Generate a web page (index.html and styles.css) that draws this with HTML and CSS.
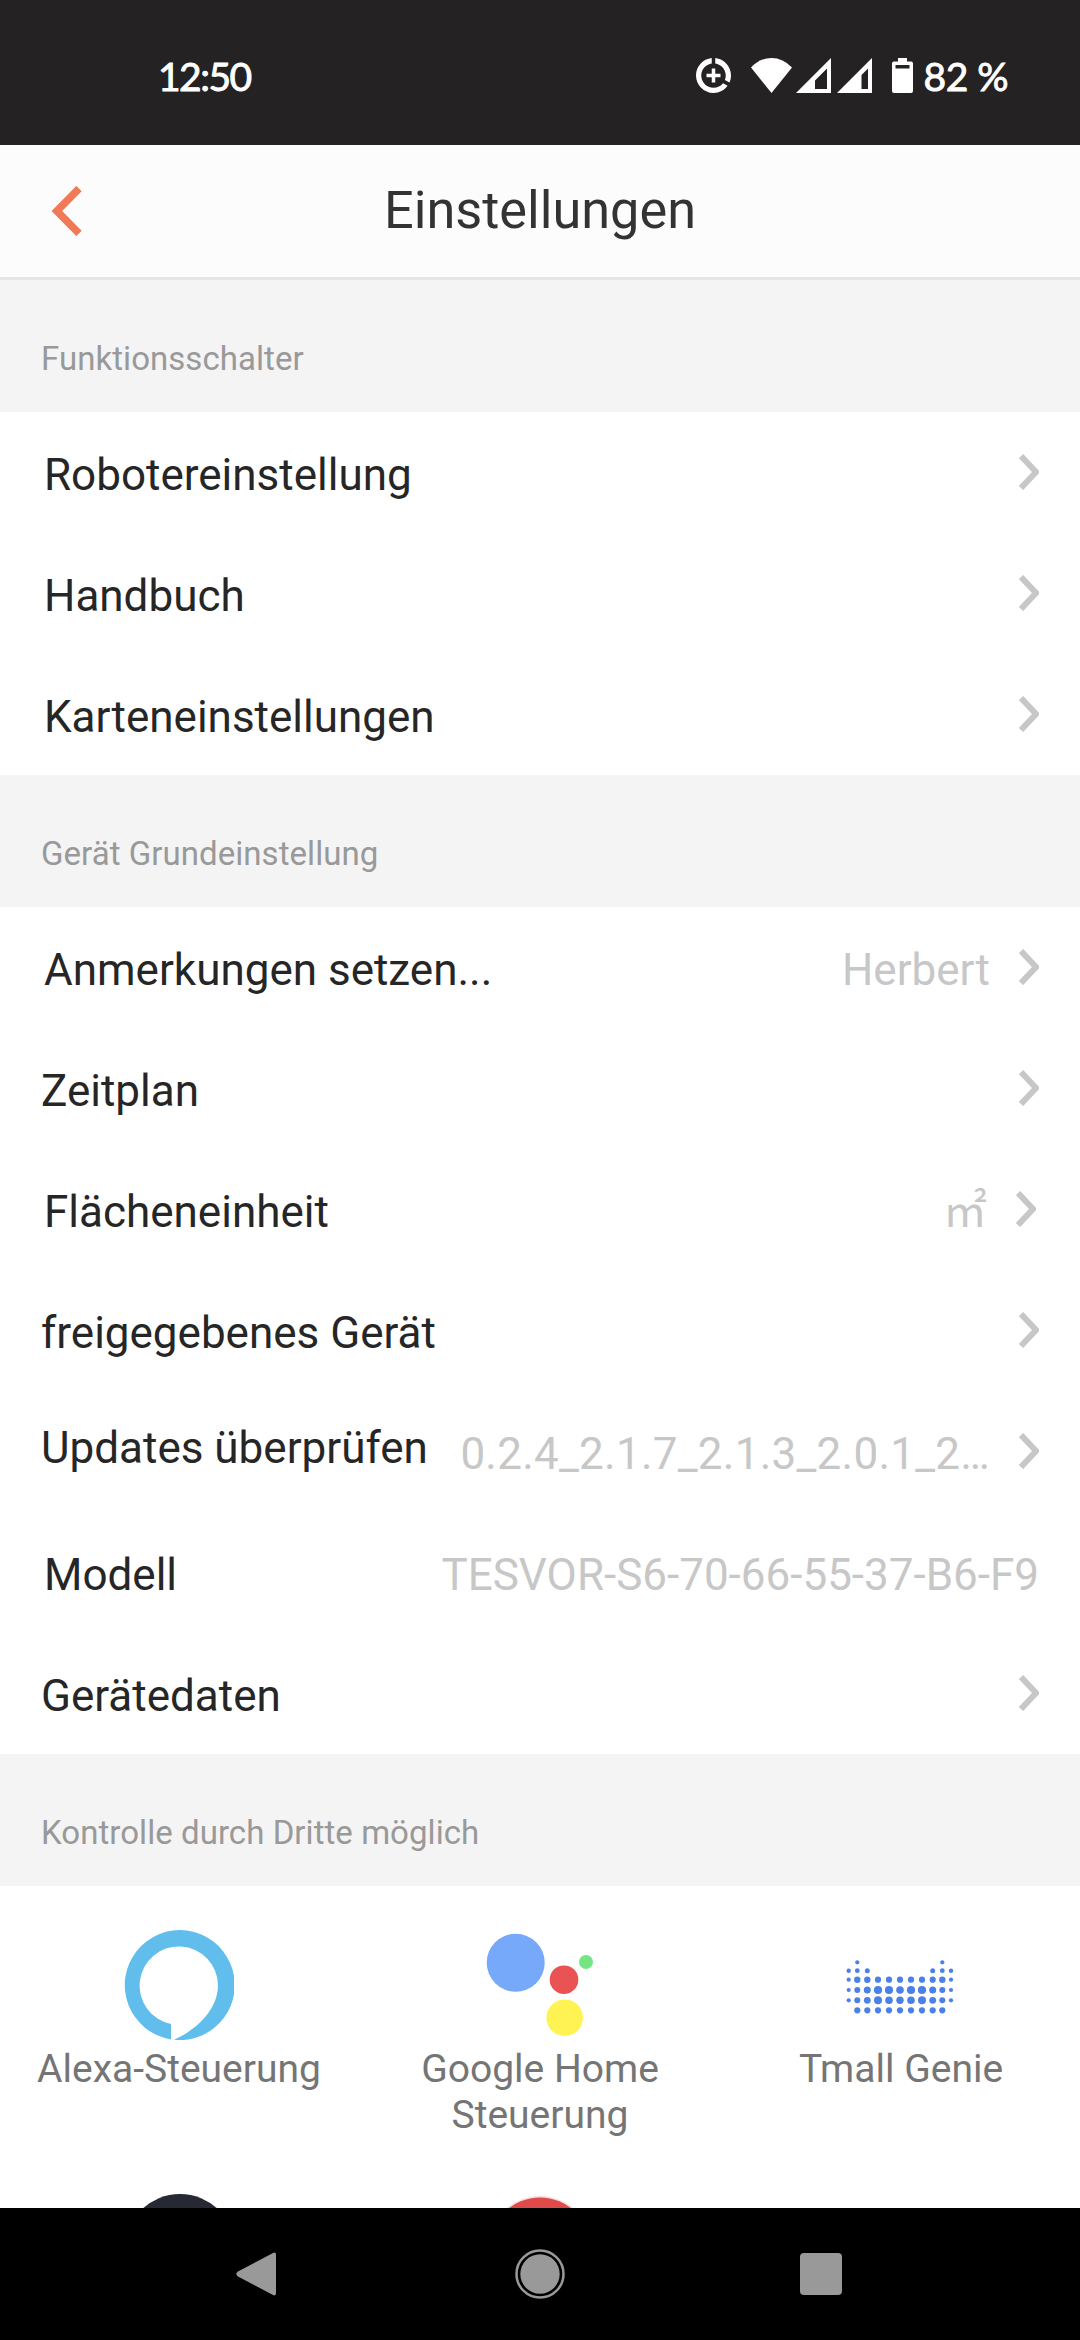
FILE: index.html
```html
<!DOCTYPE html>
<html lang="de">
<head>
	<meta charset="UTF-8">
	<title>Einstellungen</title>
	<link rel="stylesheet" href="styles.css">
</head>
<body>
	<div class="status-bar">
		<span class="time">12:50</span>
		<div class="status-icons">
			<svg class="ic-data" viewBox="2 2 20 20"><path d="M11 8v3H8v2h3v3h2v-3h3v-2h-3V8zM13 2.05v3.03c3.39.49 6 3.39 6 6.92 0 .9-.18 1.75-.48 2.54l2.6 1.53C21.68 14.83 22 13.45 22 12c0-5.18-3.95-9.45-9-9.95zM12 19c-3.87 0-7-3.13-7-7 0-3.53 2.61-6.43 6-6.92V2.05C5.94 2.55 2 6.81 2 12c0 5.52 4.47 10 9.99 10 3.31 0 6.24-1.61 8.06-4.09l-2.6-1.53C16.17 17.98 14.21 19 12 19z"/></svg>
			<svg class="ic-wifi" viewBox="0 0 41 35"><path d="M0 9.500Q9 0 20.500 0T41 9.500L20.500 35z"/></svg>
			<svg class="ic-signal" viewBox="0 0 35 35"><path fill-rule="evenodd" d="M35 0v35H0zM31 10.500L19 22.500V31h12z"/></svg>
			<svg class="ic-signal ic-signal-2" viewBox="0 0 35 35"><path fill-rule="evenodd" d="M35 0v35H0zM31 10.500L24.500 17V31H31z"/></svg>
			<svg class="ic-battery" viewBox="0 0 21 35"><path fill-rule="evenodd" d="M6 0h9v3.500h4a2 2 0 0 1 2 2V33a2 2 0 0 1-2 2H2a2 2 0 0 1-2-2V5.500a2 2 0 0 1 2-2h4zM3.500 7v3.500h14V7z"/></svg>
			<span class="percent">82 %</span>
		</div>
	</div>

	<div class="header">
		<svg class="back" viewBox="0 0 30 50"><path d="M27 2.500L4.800 25 27 47.500"/></svg>
		<h1>Einstellungen</h1>
	</div>

	<div class="content">
		<h2>Funktionsschalter</h2>
		<ul class="list">
			<li><span class="label">Robotereinstellung</span><svg class="arrow" viewBox="0 0 20 36"><path d="M2 2l15 16L2 34"/></svg></li>
			<li><span class="label">Handbuch</span><svg class="arrow" viewBox="0 0 20 36"><path d="M2 2l15 16L2 34"/></svg></li>
			<li><span class="label">Karteneinstellungen</span><svg class="arrow" viewBox="0 0 20 36"><path d="M2 2l15 16L2 34"/></svg></li>
		</ul>

		<h2>Gerät Grundeinstellung</h2>
		<ul class="list">
			<li><span class="label">Anmerkungen setzen...</span><span class="value">Herbert</span><svg class="arrow" viewBox="0 0 20 36"><path d="M2 2l15 16L2 34"/></svg></li>
			<li class="narrow"><span class="label">Zeitplan</span><svg class="arrow" viewBox="0 0 20 36"><path d="M2 2l15 16L2 34"/></svg></li>
			<li class="unit"><span class="label">Flächeneinheit</span><span class="value">㎡</span><svg class="arrow" viewBox="0 0 20 36"><path d="M2 2l15 16L2 34"/></svg></li>
			<li class="narrow"><span class="label">freigegebenes Gerät</span><svg class="arrow" viewBox="0 0 20 36"><path d="M2 2l15 16L2 34"/></svg></li>
			<li class="narrow update"><span class="label">Updates überprüfen</span><span class="value">0.2.4_2.1.7_2.1.3_2.0.1_2…</span><svg class="arrow" viewBox="0 0 20 36"><path d="M2 2l15 16L2 34"/></svg></li>
			<li><span class="label">Modell</span><span class="value last">TESVOR-S6-70-66-55-37-B6-F9</span></li>
			<li class="narrow"><span class="label">Gerätedaten</span><svg class="arrow" viewBox="0 0 20 36"><path d="M2 2l15 16L2 34"/></svg></li>
		</ul>

		<h2>Kontrolle durch Dritte möglich</h2>
		<ul class="grid">
			<li>
				<svg class="logo" viewBox="0 0 110 110"><path fill="#60bdec" d="M47 109.400A55 55 0 1 1 50 109.800C72 100 94 80 94 55A39.200 39.200 0 1 0 47 94z"/></svg>
				<span>Alexa-Steuerung</span>
			</li>
			<li>
				<svg class="logo" viewBox="0 0 110 110">
					<circle cx="30.700" cy="32.700" r="29" fill="#76a9f9"/>
					<circle cx="79" cy="49.700" r="14.300" fill="#ea5353"/>
					<circle cx="101" cy="32" r="7" fill="#74e583"/>
					<circle cx="79.700" cy="87.700" r="18.300" fill="#fff353"/>
				</svg>
				<span>Google Home<br>Steuerung</span>
			</li>
			<li>
				<svg class="logo" id="tmall" viewBox="0 0 110 110"></svg>
				<span>Tmall Genie</span>
			</li>
			<li><svg class="logo" viewBox="0 0 110 110"><circle cx="56" cy="55" r="55" fill="#262833"/></svg></li>
			<li><svg class="logo" viewBox="0 0 110 110"><circle cx="55" cy="54" r="52" fill="#f9dede"/><circle cx="55" cy="54" r="50.500" fill="#e04a4b"/></svg></li>
		</ul>
	</div>

	<div class="nav-bar">
		<svg class="nav-back" viewBox="0 0 40 44"><path d="M37 1Q40-.500 40 3v38q0 3.500-3 2L2 24.500q-3.500-2.500 0-5z"/></svg>
		<svg class="nav-home" viewBox="0 0 50 50"><circle cx="25" cy="25" r="19.700"/><circle class="ring" cx="25" cy="25" r="23.500"/></svg>
		<svg class="nav-recent" viewBox="0 0 42 42"><rect width="42" height="42" rx="4"/></svg>
	</div>

	<script type="text/javascript">
		(function(){
			// Punktmuster: Radius pro Spalte, 0 = kein Punkt
			var xs=[3.7,12.3,22.3,33,44,55,66,77,87.7,97.3,106];
			var ys=[32.3,40.7,49.7,60,70.3,80.3];
			var rows=[
				[0,2.1,0,0,0,0,0,0,0,2.1,0],
				[2.2,2.4,2.5,0,0,0,0,0,2.5,2.4,2.2],
				[2.1,3.2,3.2,3.1,3.1,3.1,3.1,3.1,3.1,3.2,2.1],
				[2.1,3.0,3.5,4.1,4.1,3.8,4.1,4.1,3.5,3.0,2.1],
				[2.1,3.0,3.4,4.0,3.8,3.7,3.8,4.0,3.4,3.0,2.1],
				[0,3.1,3.1,3.1,3.1,3.1,3.1,3.1,3.1,3.1,0]
			];
			var svg=document.querySelector('#tmall');
			for(var i=0;i<rows.length;i++){
				for(var j=0;j<xs.length;j++){
					if(!rows[i][j]) continue;
					var dot=document.createElementNS('http://www.w3.org/2000/svg','circle');
					dot.setAttribute('cx',xs[j]-1);
					dot.setAttribute('cy',ys[i]);
					dot.setAttribute('r',rows[i][j]);
					dot.setAttribute('fill','#4b80e8');
					svg.appendChild(dot);
				}
			}
		})();
	</script>
</body>
</html>
```

FILE: styles.css
```css
*{box-sizing: border-box;}
html,body{height: 100%;}
body{
	margin: 0;
	display: flex;
	flex-direction: column;
	overflow: hidden;
	background-color: #fff;
	font-family: Roboto,"Noto Sans CJK SC",sans-serif;
}
ul{margin: 0;padding: 0;}
li{list-style: none;}
svg{display: block;flex: none;}
h1,h2{margin: 0;font-weight: 400;}

.status-bar{
	flex: none;
	height: 145px;
	padding: 6px 72px 0 158px;
	display: flex;
	align-items: center;
	justify-content: space-between;
	background-color: #242223;
	color: #fff;
	fill: #fff;
	font-family: Lato,sans-serif;
	font-size: 39px;
	-webkit-text-stroke: .9px #fff;
}
.time{letter-spacing: -1.5px;}
.percent{letter-spacing: -.5px;}
.status-icons{
	display: flex;
	align-items: center;
}
.ic-data{width: 35px;height: 35px;margin-right: 20px;}
.ic-wifi{width: 41px;height: 35px;margin-right: 4px;}
.ic-signal{width: 35px;height: 35px;margin-right: 6px;}
.ic-signal-2{margin-right: 20px;}
.ic-battery{width: 21px;height: 35px;margin-right: 11px;}

.header{
	flex: none;
	height: 135px;
	padding: 0 52px;
	display: flex;
	align-items: center;
	background-color: #fcfcfc;
	border-bottom: 3px solid #e6e6e6;
}
.back{
	width: 30px;
	height: 50px;
	fill: none;
	stroke: #f07a58;
	stroke-width: 7.5;
}
.header h1{
	flex: 1;
	margin-right: 30px;
	text-align: center;
	font-size: 52.25px;
	line-height: 60px;
	color: #333;
}

.content{
	flex: 1;
	min-height: 0;
	overflow: hidden;
}
.content h2{
	height: 132px;
	padding: 59px 41px 0;
	background-color: #f4f4f4;
	color: #999;
	font-size: 33px;
	line-height: 39px;
	letter-spacing: .05px;
}
.list li{
	display: flex;
	align-items: center;
	height: 121px;
	padding: 0 41px 0 44px;
	font-size: 44px;
	line-height: 52px;
}
.list .narrow{padding-left: 41px;}
.label{
	padding-top: 5px;
	color: #262626;
	white-space: nowrap;
}
.value{
	margin-left: auto;
	padding-top: 5px;
	color: #c7c7c7;
	white-space: nowrap;
}
.arrow{
	width: 20px;
	height: 36px;
	margin-left: auto;
	margin-bottom: 2px;
	fill: none;
	stroke: #c7c7c7;
	stroke-width: 6;
}
.value + .arrow{margin-left: 29px;}
.list .unit{padding-right: 44px;}
.update .label{
	padding-top: 0;
	padding-bottom: 8px;
}
.update .value{letter-spacing: .25px;}

.grid{
	display: grid;
	grid-template-columns: 358px 364px 358px;
	grid-template-rows: 264px 264px;
	padding-top: 44px;
}
.grid li{
	display: flex;
	flex-direction: column;
	align-items: center;
	gap: 6px;
	text-align: center;
	font-size: 39px;
	line-height: 46px;
	color: #757575;
}
.logo{width: 110px;height: 110px;}

.nav-bar{
	flex: none;
	height: 132px;
	padding: 0 238px 0 236px;
	display: flex;
	align-items: center;
	justify-content: space-between;
	background-color: #000;
	fill: #999;
}
.nav-back{width: 40px;height: 44px;}
.nav-home{width: 50px;height: 50px;margin-left: 4px;}
.nav-recent{width: 42px;height: 42px;}
.ring{
	fill: none;
	stroke: #999;
	stroke-width: 2.5;
}
```
